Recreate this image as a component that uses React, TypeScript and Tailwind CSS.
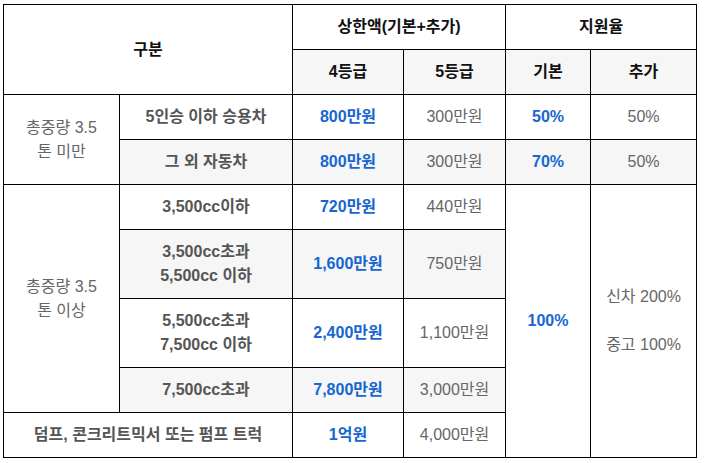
import React from "react";

const font = { fontFamily: '"Liberation Sans", "Noto Sans CJK KR", sans-serif' };

const td = "border border-black text-center align-middle px-1";
const blue = "text-[#1766d1] font-bold";
const gray = "text-[#666666]";
const label = "text-[#555555] font-bold";
const head = "text-[#111111] font-bold";
const bg = "bg-[#f6f6f6]";

export default function App() {
  return (
    <div className="bg-white w-[708px] h-[463px] pl-[3px] pt-[4px]" style={font}>
      <table className="border-collapse table-fixed text-[16px] leading-[24px] w-[693px]">
        <colgroup>
          <col className="w-[116px]" />
          <col className="w-[173px]" />
          <col className="w-[111px]" />
          <col className="w-[102px]" />
          <col className="w-[85px]" />
          <col className="w-[106px]" />
        </colgroup>
        <tbody>
          <tr className="h-[45px]">
            <td rowSpan={2} colSpan={2} className={`${td} ${head}`}>구분</td>
            <td colSpan={2} className={`${td} ${head}`}>상한액(기본+추가)</td>
            <td colSpan={2} className={`${td} ${head}`}>지원율</td>
          </tr>
          <tr className="h-[45px]">
            <td className={`${td} ${head} ${bg}`}>4등급</td>
            <td className={`${td} ${head} ${bg}`}>5등급</td>
            <td className={`${td} ${head} ${bg}`}>기본</td>
            <td className={`${td} ${head} ${bg}`}>추가</td>
          </tr>
          <tr className="h-[45px]">
            <td rowSpan={2} className={`${td} ${gray}`}>총중량 3.5<br />톤 미만</td>
            <td className={`${td} ${label}`}>5인승 이하 승용차</td>
            <td className={`${td} ${blue}`}>800만원</td>
            <td className={`${td} ${gray}`}>300만원</td>
            <td className={`${td} ${blue}`}>50%</td>
            <td className={`${td} ${gray}`}>50%</td>
          </tr>
          <tr className="h-[45px]">
            <td className={`${td} ${label} ${bg}`}>그 외 자동차</td>
            <td className={`${td} ${blue} ${bg}`}>800만원</td>
            <td className={`${td} ${gray} ${bg}`}>300만원</td>
            <td className={`${td} ${blue} ${bg}`}>70%</td>
            <td className={`${td} ${gray} ${bg}`}>50%</td>
          </tr>
          <tr className="h-[45px]">
            <td rowSpan={4} className={`${td} ${gray}`}>총중량 3.5<br />톤 이상</td>
            <td className={`${td} ${label}`}>3,500cc이하</td>
            <td className={`${td} ${blue}`}>720만원</td>
            <td className={`${td} ${gray}`}>440만원</td>
            <td rowSpan={5} className={`${td} ${blue}`}>100%</td>
            <td rowSpan={5} className={`${td} ${gray}`}>신차 200%<br /><br />중고 100%</td>
          </tr>
          <tr className="h-[69px]">
            <td className={`${td} ${label} ${bg}`}>3,500cc초과<br />5,500cc 이하</td>
            <td className={`${td} ${blue} ${bg}`}>1,600만원</td>
            <td className={`${td} ${gray} ${bg}`}>750만원</td>
          </tr>
          <tr className="h-[69px]">
            <td className={`${td} ${label}`}>5,500cc초과<br />7,500cc 이하</td>
            <td className={`${td} ${blue}`}>2,400만원</td>
            <td className={`${td} ${gray}`}>1,100만원</td>
          </tr>
          <tr className="h-[45px]">
            <td className={`${td} ${label} ${bg}`}>7,500cc초과</td>
            <td className={`${td} ${blue} ${bg}`}>7,800만원</td>
            <td className={`${td} ${gray} ${bg}`}>3,000만원</td>
          </tr>
          <tr className="h-[45px]">
            <td colSpan={2} className={`${td} ${label}`}>덤프, 콘크리트믹서 또는 펌프 트럭</td>
            <td className={`${td} ${blue}`}>1억원</td>
            <td className={`${td} ${gray}`}>4,000만원</td>
          </tr>
        </tbody>
      </table>
    </div>
  );
}
